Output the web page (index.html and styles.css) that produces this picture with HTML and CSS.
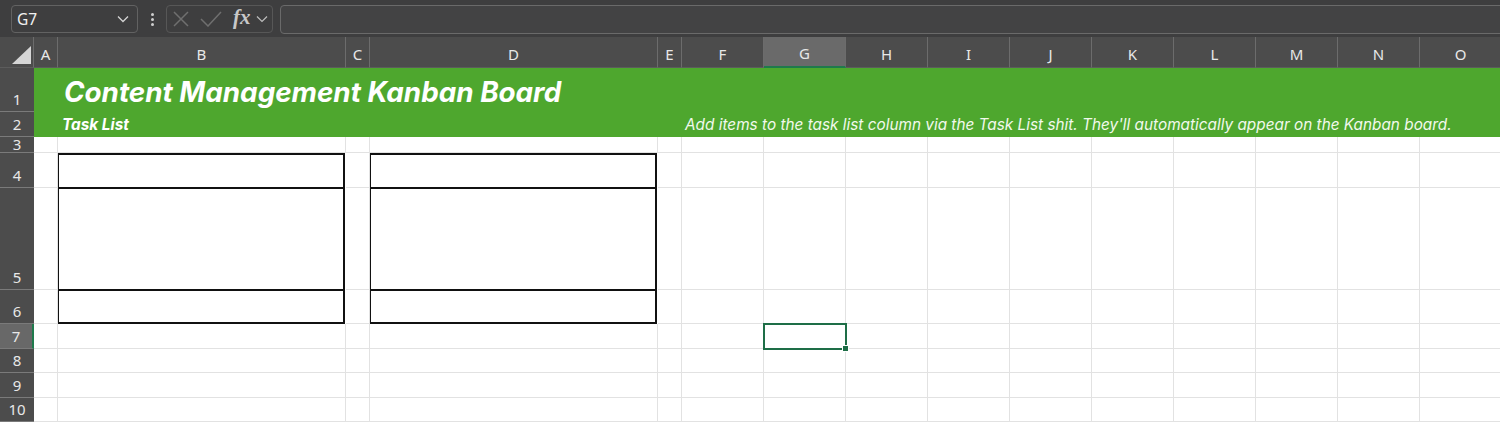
FILE: index.html
```html
<!DOCTYPE html>
<html>
<head>
<meta charset="utf-8">
<title>Content Management Kanban Board</title>
<link rel="stylesheet" href="styles.css">
</head>
<body>
<div class="app">
  <div class="fbar">
    <div class="namebox">
      <span class="ref">G7</span>
      <svg class="chev" width="12" height="8" viewBox="0 0 12 8"><path d="M1 1.5 L6 6.5 L11 1.5" fill="none" stroke="#d4d4d4" stroke-width="1.3"/></svg>
    </div>
    <div class="grip"><span></span><span></span><span></span></div>
    <div class="fbtns">
      <svg class="ic-x" width="18" height="18" viewBox="0 0 18 18"><path d="M2 2 L16 16 M16 2 L2 16" fill="none" stroke="#6f6f6f" stroke-width="1.5"/></svg>
      <svg class="ic-ok" width="22" height="16" viewBox="0 0 22 16"><path d="M1 8 L8 15 L21 1" fill="none" stroke="#6f6f6f" stroke-width="1.5"/></svg>
      <span class="fx">fx</span>
      <svg class="ic-dd" width="12" height="8" viewBox="0 0 12 8"><path d="M1 1.5 L6 6.5 L11 1.5" fill="none" stroke="#bdbdbd" stroke-width="1.2"/></svg>
    </div>
    <div class="finput"></div>
  </div>

  <div class="sheet">
    <div class="corner"><svg width="22" height="20" viewBox="0 0 22 20"><polygon points="21,1 21,19 2,19" fill="#d6d6d6"/></svg></div>
    <div class="ch">A</div><div class="ch">B</div><div class="ch">C</div><div class="ch">D</div><div class="ch">E</div>
    <div class="ch">F</div><div class="ch ch-sel">G</div><div class="ch">H</div><div class="ch">I</div><div class="ch">J</div>
    <div class="ch">K</div><div class="ch">L</div><div class="ch">M</div><div class="ch">N</div><div class="ch">O</div>

    <div class="banner">
      <div class="title">Content Management Kanban Board</div>
      <div class="sub">
        <span class="tasklist">Task List</span>
        <span class="hint">Add items to the task list column via the Task List shit. They'll automatically appear on the Kanban board.</span>
      </div>
    </div>

    <div class="card card-b"><div class="slot s1"></div><div class="slot s2"></div><div class="slot s3"></div></div>
    <div class="card card-d"><div class="slot s1"></div><div class="slot s2"></div><div class="slot s3"></div></div>

    <div class="rh">1</div>
    <div class="rh">2</div>

    <div class="rh rh-short">3</div>
    <div class="c"></div><div class="c"></div><div class="c"></div><div class="c"></div><div class="c"></div>
    <div class="c"></div><div class="c"></div><div class="c"></div><div class="c"></div><div class="c"></div>
    <div class="c"></div><div class="c"></div><div class="c"></div><div class="c"></div><div class="c"></div>

    <div class="rh">4</div>
    <div class="c"></div><div class="c"></div><div class="c"></div><div class="c"></div><div class="c"></div>
    <div class="c"></div><div class="c"></div><div class="c"></div><div class="c"></div><div class="c"></div>
    <div class="c"></div><div class="c"></div><div class="c"></div>

    <div class="rh">5</div>
    <div class="c"></div><div class="c"></div><div class="c"></div><div class="c"></div><div class="c"></div>
    <div class="c"></div><div class="c"></div><div class="c"></div><div class="c"></div><div class="c"></div>
    <div class="c"></div><div class="c"></div><div class="c"></div>

    <div class="rh">6</div>
    <div class="c"></div><div class="c"></div><div class="c"></div><div class="c"></div><div class="c"></div>
    <div class="c"></div><div class="c"></div><div class="c"></div><div class="c"></div><div class="c"></div>
    <div class="c"></div><div class="c"></div><div class="c"></div>

    <div class="rh rh-sel">7</div>
    <div class="c"></div><div class="c"></div><div class="c"></div><div class="c"></div><div class="c"></div>
    <div class="c"></div><div class="c sel"></div><div class="c"></div><div class="c"></div><div class="c"></div>
    <div class="c"></div><div class="c"></div><div class="c"></div><div class="c"></div><div class="c"></div>

    <div class="rh">8</div>
    <div class="c"></div><div class="c"></div><div class="c"></div><div class="c"></div><div class="c"></div>
    <div class="c"></div><div class="c"></div><div class="c"></div><div class="c"></div><div class="c"></div>
    <div class="c"></div><div class="c"></div><div class="c"></div><div class="c"></div><div class="c"></div>

    <div class="rh">9</div>
    <div class="c"></div><div class="c"></div><div class="c"></div><div class="c"></div><div class="c"></div>
    <div class="c"></div><div class="c"></div><div class="c"></div><div class="c"></div><div class="c"></div>
    <div class="c"></div><div class="c"></div><div class="c"></div><div class="c"></div><div class="c"></div>

    <div class="rh">10</div>
    <div class="c"></div><div class="c"></div><div class="c"></div><div class="c"></div><div class="c"></div>
    <div class="c"></div><div class="c"></div><div class="c"></div><div class="c"></div><div class="c"></div>
    <div class="c"></div><div class="c"></div><div class="c"></div><div class="c"></div><div class="c"></div>
  </div>
</div>
</body>
</html>
```

FILE: styles.css
```css
html, body {
  margin: 0;
  padding: 0;
  background: #ffffff;
}

.app {
  width: 1500px;
  height: 422px;
  overflow: hidden;
  font-family: "Noto Sans", "Open Sans", sans-serif;
}

/* ---------- formula bar ---------- */
.fbar {
  height: 37px;
  box-sizing: border-box;
  padding-top: 5px;
  background: #3e3e3f;
  display: flex;
  align-items: flex-start;
}

.namebox {
  margin-left: 11px;
  width: 127px;
  height: 28px;
  box-sizing: border-box;
  border: 1px solid #626262;
  border-radius: 4px;
  display: flex;
  align-items: center;
  justify-content: space-between;
  padding: 0 8px 0 5px;
}

.ref {
  color: #f0f0f0;
  font-size: 15.5px;
}

.grip {
  width: 28px;
  height: 28px;
  display: flex;
  flex-direction: column;
  align-items: center;
  justify-content: center;
  gap: 2px;
}

.grip span {
  width: 3px;
  height: 3px;
  border-radius: 50%;
  background: #cfcfcf;
}

.fbtns {
  width: 107px;
  height: 28px;
  box-sizing: border-box;
  border: 1px solid #575757;
  border-radius: 4px;
  display: flex;
  align-items: center;
  padding-left: 5px;
}

.ic-ok {
  margin-left: 10px;
}

.fx {
  margin-left: 11px;
  font-family: "Liberation Serif", "DejaVu Serif", serif;
  font-style: italic;
  font-weight: 700;
  font-size: 21px;
  line-height: 20px;
  color: #c8c8c8;
  position: relative;
  top: -2px;
}

.ic-dd {
  margin-left: 5px;
}

.finput {
  margin-left: 7px;
  margin-right: -10px;
  flex: 1;
  height: 29px;
  box-sizing: border-box;
  border: 1px solid #6a6a6a;
  border-radius: 4px;
  background: #434344;
}

/* ---------- sheet grid ---------- */
.sheet {
  display: grid;
  grid-template-columns: 34px 24px 288px 24px 288px 24px repeat(10, 82px);
  grid-template-rows: 31px 44px 25px 16px 35px 102px 34px 25px 24px 25px 24px;
}

.corner {
  background: #4c4c4c;
  border-right: 1px solid #6c6c6c;
  border-bottom: 1px solid #5c5c5c;
  box-sizing: border-box;
  display: flex;
  align-items: flex-end;
  justify-content: flex-end;
  padding: 0 1px 2px 0;
}

.ch {
  background: #4c4c4c;
  color: #e8e8e8;
  font-size: 15px;
  display: flex;
  align-items: center;
  justify-content: center;
  padding-top: 3px;
  box-sizing: border-box;
  border-right: 1px solid #6c6c6c;
  border-bottom: 1px solid #5c5c5c;
}

.ch-sel {
  background: #6a6a6a;
  border-bottom: 2px solid #1f7a4c;
}

.rh {
  grid-column: 1;
  background: #4c4c4c;
  color: #e8e8e8;
  font-size: 15px;
  line-height: 20px;
  display: flex;
  align-items: flex-end;
  justify-content: center;
  padding-bottom: 2px;
  box-sizing: border-box;
  border-bottom: 1px solid #7a7a7a;
  overflow: hidden;
}

.rh-short {
  line-height: 15px;
  padding-bottom: 0;
}

.rh-sel {
  background: #686868;
  border-right: 2px solid #1f7a4c;
}

.c {
  background: #ffffff;
  box-sizing: border-box;
  border-right: 1px solid #e2e2e2;
  border-bottom: 1px solid #e2e2e2;
}

.sel {
  position: relative;
  z-index: 2;
  margin: -1px -1px -1px -1px;
  border: 2px solid #1e6e47;
  background: transparent;
}

.sel::after {
  content: "";
  position: absolute;
  right: -4px;
  bottom: -4px;
  width: 5px;
  height: 5px;
  background: #1e6e47;
  border: 1px solid #ffffff;
}

/* ---------- green banner ---------- */
.banner {
  grid-row: 2 / 4;
  grid-column: 2 / 17;
  background: #4ea72e;
  display: grid;
  grid-template-rows: 44px 25px;
  color: #ffffff;
  font-family: "Inter", "Noto Sans", sans-serif;
}

.title {
  padding: 4px 0 0 30px;
  display: flex;
  align-items: center;
  font-size: 27.8px;
  font-weight: 700;
  font-style: italic;
}

.sub {
  display: grid;
  grid-template-columns: 648px 1fr;
  line-height: 25px;
  font-size: 15.35px;
  font-style: italic;
}

.tasklist {
  padding-left: 28px;
  font-weight: 700;
}

.hint {
  padding-left: 3px;
  color: #f2f9ec;
  white-space: nowrap;
}

/* ---------- kanban cards ---------- */
.card {
  grid-row: 5 / 8;
  margin: 0 1px 0 -1px;
  background: #ffffff;
  border: 2px solid #111111;
  box-sizing: border-box;
  display: grid;
  grid-template-rows: 34px 102px 1fr;
}

.card-b {
  grid-column: 3;
}

.card-d {
  grid-column: 5;
}

.slot {
  box-sizing: border-box;
}

.s1, .s2 {
  border-bottom: 2px solid #111111;
}
```
